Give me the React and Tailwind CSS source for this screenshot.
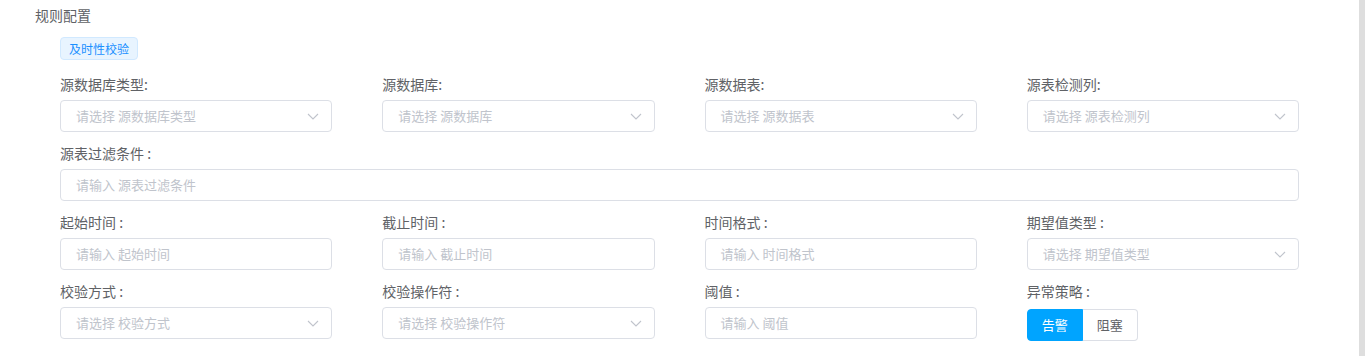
import React from "react";

const font = { fontFamily: '"Noto Sans CJK SC", "Liberation Sans", sans-serif' };

function Chevron() {
  return (
    <svg width="12" height="7" viewBox="0 0 12 7" className="shrink-0">
      <path d="M1 1 L6 6 L11 1" fill="none" stroke="#c0c4cc" strokeWidth="1.1" />
    </svg>
  );
}

function Field({ label, placeholder, select, wide }) {
  return (
    <div className={"flex flex-col gap-[5px] " + (wide ? "col-span-4" : "")}>
      <div className="h-[22px] leading-[22px] text-[14px] text-[#606266]">{label}</div>
      <div className="h-[32px] flex items-center justify-between pl-[15px] pr-[12px] border border-[#dcdfe6] rounded-[4px] bg-white">
        <span className="text-[13px] text-[#c0c4cc]">{placeholder}</span>
        {select && <Chevron />}
      </div>
    </div>
  );
}

export default function App() {
  return (
    <div className="w-[1365px] h-[356px] flex bg-white overflow-hidden" style={font}>
      <div className="flex-1 flex flex-col pt-[4px]">
        <div className="pl-[35px] h-[22px] leading-[22px] text-[14px] text-[#606266]">规则配置</div>
        <div className="pl-[60px] pr-[60px] flex flex-col">
          <div className="mt-[11px] self-start h-[23px] px-[8px] flex items-center text-[12px] text-[#1a90ff] bg-[#e8f4ff] border border-[#d1e9ff] rounded-[4px]">
            及时性校验
          </div>
          <div className="mt-[13px] grid grid-cols-4 gap-x-[50px] gap-y-[10px]">
            <Field label="源数据库类型:" placeholder="请选择 源数据库类型" select />
            <Field label="源数据库:" placeholder="请选择 源数据库" select />
            <Field label="源数据表:" placeholder="请选择 源数据表" select />
            <Field label="源表检测列:" placeholder="请选择 源表检测列" select />
            <Field label="源表过滤条件 :" placeholder="请输入 源表过滤条件" wide />
            <Field label="起始时间 :" placeholder="请输入 起始时间" />
            <Field label="截止时间 :" placeholder="请输入 截止时间" />
            <Field label="时间格式 :" placeholder="请输入 时间格式" />
            <Field label="期望值类型 :" placeholder="请选择 期望值类型" select />
            <Field label="校验方式 :" placeholder="请选择 校验方式" select />
            <Field label="校验操作符 :" placeholder="请选择 校验操作符" select />
            <Field label="阈值 :" placeholder="请输入 阈值" />
            <div className="flex flex-col gap-[5px]">
              <div className="h-[22px] leading-[22px] text-[14px] text-[#606266]">异常策略 :</div>
              <div className="flex mt-[2px]">
                <div className="w-[56px] h-[32px] flex items-center justify-center text-[13px] text-white bg-[#00a4ff] border border-[#00a4ff] rounded-l-[4px]">
                  告警
                </div>
                <div className="w-[55px] h-[32px] flex items-center justify-center text-[13px] text-[#606266] bg-white border border-l-0 border-[#dcdfe6] rounded-r-[4px]">
                  阻塞
                </div>
              </div>
            </div>
          </div>
        </div>
      </div>
      <div className="w-[6px] h-full bg-[#dedede]" />
    </div>
  );
}
